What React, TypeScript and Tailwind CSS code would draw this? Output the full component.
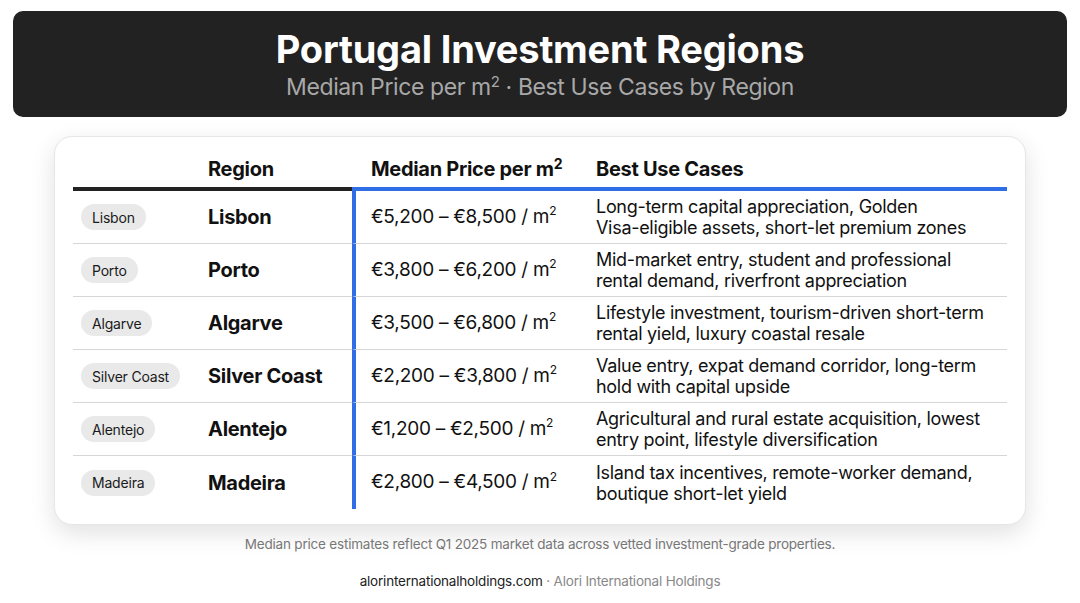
const rows = [
  {
    name: "Lisbon",
    price: "€5,200 – €8,500 / m",
    use: ["Long-term capital appreciation, Golden", "Visa-eligible assets, short-let premium zones"],
  },
  {
    name: "Porto",
    price: "€3,800 – €6,200 / m",
    use: ["Mid-market entry, student and professional", "rental demand, riverfront appreciation"],
  },
  {
    name: "Algarve",
    price: "€3,500 – €6,800 / m",
    use: ["Lifestyle investment, tourism-driven short-term", "rental yield, luxury coastal resale"],
  },
  {
    name: "Silver Coast",
    price: "€2,200 – €3,800 / m",
    use: ["Value entry, expat demand corridor, long-term", "hold with capital upside"],
  },
  {
    name: "Alentejo",
    price: "€1,200 – €2,500 / m",
    use: ["Agricultural and rural estate acquisition, lowest", "entry point, lifestyle diversification"],
  },
  {
    name: "Madeira",
    price: "€2,800 – €4,500 / m",
    use: ["Island tax incentives, remote-worker demand,", "boutique short-let yield"],
  },
];

export default function App() {
  return (
    <div className="w-[1080px] h-[603px] bg-white overflow-hidden font-['Inter',sans-serif] text-[#111]">
      {/* header banner */}
      <div className="mx-[13px] mt-[11px] h-[106px] rounded-[10px] bg-[#222222] flex flex-col items-center justify-center">
        <h1 className="text-[38px] leading-[44px] font-bold text-white tracking-[-0.2px]">
          Portugal Investment Regions
        </h1>
        <p className="mt-[1px] text-[23px] leading-[30px] text-[#a8a8a8] tracking-[-0.4px]">
          Median Price per m<span className="align-top text-[15px] leading-[20px]">2</span> · Best Use Cases by Region
        </p>
      </div>

      {/* table card */}
      <div className="mx-[54px] mt-[19px] rounded-[18px] bg-white border border-[#e6e6e6] shadow-[0_8px_24px_rgba(0,0,0,0.12)] px-[18px] pt-[17px] pb-[15px]">
        <div className="grid grid-cols-[127px_152px_228px_1fr]">
          <div className="border-b-4 border-[#222]" />
          <div className="border-b-4 border-[#222] pl-2 pb-[3px] text-[20px] font-bold tracking-[-0.3px]">Region</div>
          <div className="border-b-4 border-[#2f6ee6] pl-[19px] pb-[3px] text-[20px] font-bold tracking-[-0.3px]">
            Median Price per m<sup className="text-[14px]">2</sup>
          </div>
          <div className="border-b-4 border-[#2f6ee6] pl-4 pb-[3px] text-[20px] font-bold tracking-[-0.3px]">Best Use Cases</div>

          {rows.map((r, i) => {
            const line = i < rows.length - 1 ? "border-b border-[#d6d6d6]" : "";
            return (
              <div key={r.name} className="contents">
                <div className={`h-[53px] flex items-center pl-2 ${line}`}>
                  <span className="rounded-full bg-[#e9e9e9] px-[11px] h-[26px] flex items-center text-[14px] text-[#1a1a1a] tracking-[-0.2px]">
                    {r.name}
                  </span>
                </div>
                <div className={`h-[53px] flex items-center pl-2 text-[20px] font-bold tracking-[-0.3px] ${line}`}>
                  {r.name}
                </div>
                <div className={`h-[53px] flex items-center border-l-4 border-l-[#2f6ee6] pl-[15px] text-[19px] tracking-[-0.3px] ${line}`}>
                  {r.price}
                  <sup className="text-[12px]">2</sup>
                </div>
                <div className={`h-[53px] flex flex-col justify-center pl-4 pr-3 text-[18px] leading-[21px] tracking-[-0.3px] whitespace-nowrap ${line}`}>
                  <span>{r.use[0]}</span>
                  <span>{r.use[1]}</span>
                </div>
              </div>
            );
          })}
        </div>
      </div>

      <p className="mt-[9px] text-center text-[13.5px] leading-[20px] text-[#777] tracking-[-0.2px]">
        Median price estimates reflect Q1 2025 market data across vetted investment-grade properties.
      </p>
      <p className="mt-[17px] text-center text-[13.5px] leading-[20px] tracking-[-0.2px]">
        <span className="text-[#222]">alorinternationalholdings.com</span>
        <span className="text-[#888]"> · Alori International Holdings</span>
      </p>
    </div>
  );
}
